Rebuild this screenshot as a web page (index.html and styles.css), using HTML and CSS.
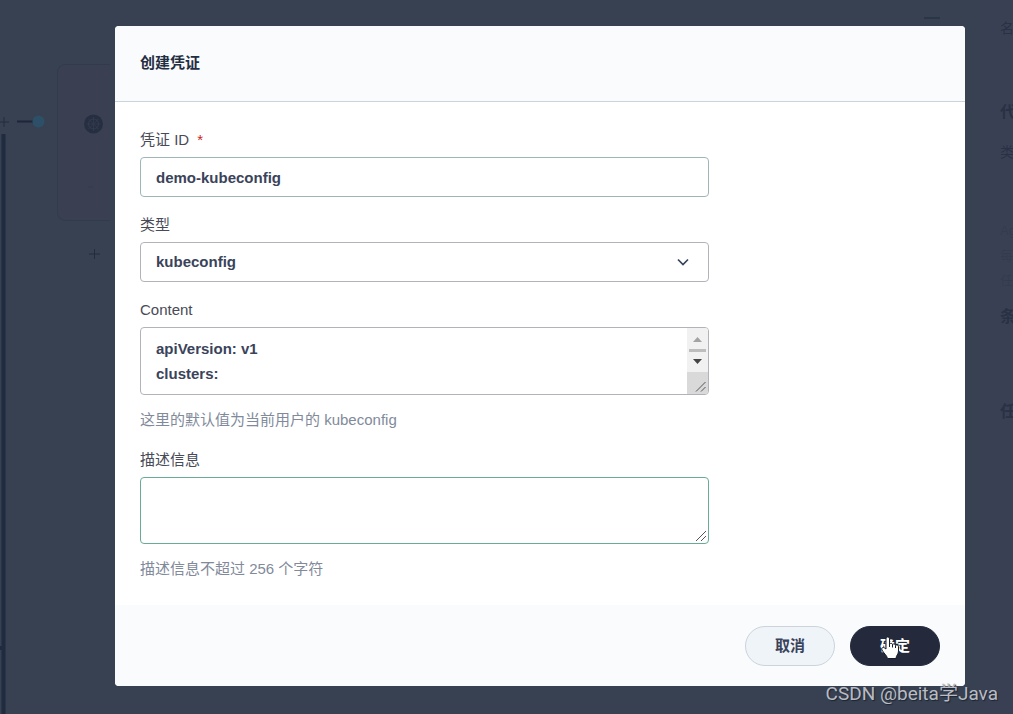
FILE: index.html
```html
<!DOCTYPE html>
<html lang="zh-CN">
<head>
<meta charset="utf-8">
<meta name="viewport" content="width=device-width, initial-scale=1">
<title>创建凭证</title>
<link rel="stylesheet" href="styles.css">
</head>
<body>
<div class="page">
  <div class="backdrop" aria-hidden="true">
    <svg class="pipeline" width="115" height="714" viewBox="0 0 115 714">
      <path d="M110 64.500H65.500a8 8 0 0 0-8 8v140a8 8 0 0 0 8 8H110" fill="#3a4052" stroke="#303b4e"/>
      <path d="M0 122h9M4 117v10M89 254h11M94.500 249v10" stroke="#222c40" stroke-width="1" fill="none"/>
      <path d="M17 121.500h16" stroke="#1d273c" stroke-width="2"/>
      <circle cx="38.500" cy="121.500" r="6" fill="#2d5068"/>
      <circle cx="93.500" cy="124" r="9.500" fill="#262f42"/>
      <g stroke="#343d4f" fill="none"><circle cx="93.500" cy="124" r="5"/><path d="M93.500 117v14M86.500 124h14M88.500 119l10 10M98.500 119l-10 10" stroke-width=".7"/></g>
      <path d="M88 187h5" stroke="#303a4d"/>
      <path d="M3.500 134v580M0 648h3" stroke="#202b40" stroke-width="4"/>
    </svg>
    <div class="panel">
      <span class="close-line"></span>
      <p class="panel-text">名称</p>
      <p class="panel-title title-agent">代理</p>
      <p class="panel-text text-type">类型</p>
      <p class="panel-note">Agent 配置<br>每个流水线<br>任务</p>
      <p class="panel-title title-condition">条件</p>
      <p class="panel-title title-task">任务</p>
    </div>
  </div>

  <main class="modal" role="dialog" aria-labelledby="dialog-title">
    <header class="modal-header"><h1 class="modal-title" id="dialog-title">创建凭证</h1></header>
    <form class="modal-form">
      <div class="modal-body">
        <div class="field">
          <label class="label" for="credential-id">凭证 ID <span class="required">*</span></label>
          <input class="control" id="credential-id" type="text" value="demo-kubeconfig">
        </div>
        <div class="field">
          <label class="label" for="type">类型</label>
          <div class="control-wrap">
            <select class="control" id="type"><option>kubeconfig</option></select>
            <svg class="chevron" width="12" height="8" viewBox="0 0 12 8"><path d="M1 1.500l5 5 5-5" fill="none" stroke="#36435c" stroke-width="1.700"/></svg>
          </div>
        </div>
        <div class="field">
          <label class="label" for="content">Content</label>
          <div class="control-wrap">
            <textarea class="control area" id="content">apiVersion: v1
clusters:</textarea>
            <svg class="scrollbar" width="21" height="66" viewBox="0 0 21 66">
              <path fill="#f1f1f1" d="M0 0h21v44H0z"/><path fill="#d9d9d9" d="M0 44h21v22H0z"/>
              <path fill="#a3a3a3" d="M6 14l4.500-5 4.500 5z"/><path fill="#bdbdbd" d="M2 21h17v3H2z"/>
              <path fill="#444" d="M6 31h9l-4.500 5z"/>
              <path d="M9 63.500l9.500-9.500M14 63.500l4.500-4.500" stroke="#555" fill="none"/>
            </svg>
          </div>
          <p class="hint">这里的默认值为当前用户的 kubeconfig</p>
        </div>
        <div class="field">
          <label class="label" for="description">描述信息</label>
          <div class="control-wrap">
            <textarea class="control area active" id="description"></textarea>
            <svg class="grip" width="12" height="12" viewBox="0 0 12 12"><path d="M1 11l10-10M6 11l5-5" stroke="#555" fill="none"/></svg>
          </div>
          <p class="hint">描述信息不超过 256 个字符</p>
        </div>
      </div>
      <footer class="modal-footer">
        <button class="button" type="button">取消</button>
        <button class="button primary" type="button">确定
          <svg class="pointer" width="19" height="24" viewBox="0 0 19 24"><path d="M5 13V3C5 .2 8.500.2 8.500 3v5c1-1 2.800-.8 3 .5 1-1 2.800-.5 3 .8 1.200-.8 3-.2 3 1.500V15c0 3.500-2.500 4.500-2.500 7.500H6.500C6 19.500 2.500 17 1 14c-1-2 1.200-3.500 2.800-1.800z" fill="#fff" stroke="#161d2e"/><path d="M8.500 8v3M11.500 8.500v3M14.500 9.500v2.500" stroke="#161d2e" fill="none"/></svg>
        </button>
      </footer>
    </form>
  </main>
  <div class="watermark">CSDN @beita学Java</div>
</div>
</body>
</html>
```
FILE: styles.css
```css
* { box-sizing: border-box; }
body {
  margin: 0;
  background: #374152;
  color: #3a435a;
  font: 15px/20px "Liberation Sans", "Noto Sans CJK SC", sans-serif;
}
h1, p { margin: 0; }
.page {
  position: relative;
  min-height: 100vh;
  padding: 26px 48px 28px 115px;
  overflow: hidden;
}
.backdrop {
  position: absolute;
  inset: 0;
  display: flex;
  justify-content: space-between;
  overflow: hidden;
}
.pipeline { flex: none; }
.panel {
  position: relative;
  width: 36px;
  padding: 18px 0 0 23px;
  background: #3a4053;
  color: #283145;
  white-space: nowrap;
}
.close-line {
  position: absolute;
  right: 73px;
  top: 17px;
  width: 16px;
  height: 2px;
  background: #2b3548;
}
.panel-text { font-size: 14px; }
.panel-title { font-size: 16px; font-weight: 700; }
.title-agent { margin-top: 64px; }
.text-type { margin-top: 20px; }
.panel-note { margin-top: 56px; color: #333c4f; font-size: 13px; line-height: 25px; }
.title-condition { margin-top: 14px; }
.title-task { margin-top: 75px; }
.modal {
  position: relative;
  max-width: 850px;
  background: #fff;
  border-radius: 4px;
  overflow: hidden;
}
.modal-header {
  padding: 27px 25px 28px;
  background: #f9fbfd;
  border-bottom: 1px solid #ccd3db;
}
.modal-title { color: #242e42; font-size: 15px; line-height: 20px; }
.modal-body {
  display: flex;
  flex-direction: column;
  gap: 17px;
  padding: 27px 25px 24px;
}
.field { width: 100%; max-width: 569px; }
.label { display: block; margin-bottom: 6px; color: #484b57; line-height: 22px; }
.required { margin-left: 4px; color: #ca2621; }
.control-wrap { position: relative; }
.control {
  display: block;
  width: 100%;
  height: 40px;
  margin: 0;
  padding: 0 15px;
  border: 1px solid #b0b4ba;
  border-radius: 4px;
  outline: 0;
  appearance: none;
  background: #fff;
  color: #3a435a;
  font: inherit;
  font-weight: 700;
}
#credential-id { border-color: #9fb5b8; }
.area {
  height: 68px;
  padding: 8px 15px;
  line-height: 25px;
  resize: none;
  overflow: auto;
  scrollbar-width: none;
}
.control.active { height: 67px; border-color: #6aab98; }
.chevron { position: absolute; right: 20px; top: 16px; }
.scrollbar { position: absolute; right: 1px; top: 1px; border-radius: 0 3px 3px 0; }
.grip { position: absolute; right: 2px; bottom: 2px; }
.hint { margin-top: 13px; color: #818a9b; line-height: 24px; }
.modal-footer {
  display: flex;
  justify-content: flex-end;
  gap: 15px;
  padding: 21px 25px 20px;
  background: #f9fbfd;
}
.button {
  position: relative;
  width: 90px;
  height: 40px;
  padding: 0;
  border: 1px solid #ccd3db;
  border-radius: 20px;
  background: #eff4f9;
  color: #3a435a;
  font: inherit;
  font-weight: 700;
}
.primary { border-color: #242a3c; background: #242a3c; color: #fff; }
.pointer { position: absolute; left: 30px; top: 9px; }
.watermark {
  position: absolute;
  right: 15px;
  bottom: 8px;
  color: #b9bcc2;
  font: 19px/24px Roboto, "Noto Sans CJK SC", sans-serif;
  text-shadow: 1px 1px 1px #1c2433;
}
```
